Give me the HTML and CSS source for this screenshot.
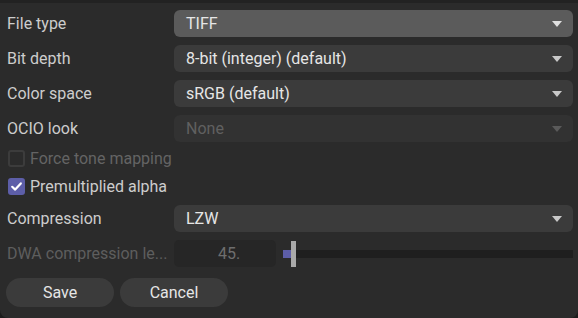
FILE: index.html
```html
<!DOCTYPE html>
<html lang="en">
<head>
    <meta charset="utf-8">
    <title>Export settings</title>
    <link rel="stylesheet" href="styles.css">
</head>
<body>
    <div class="dialog">
        <div class="row">
            <span class="label">File type</span>
            <div class="select hover"><span>TIFF</span><i class="arrow"></i></div>
        </div>
        <div class="row">
            <span class="label">Bit depth</span>
            <div class="select"><span>8-bit (integer) (default)</span><i class="arrow"></i></div>
        </div>
        <div class="row">
            <span class="label">Color space</span>
            <div class="select"><span>sRGB (default)</span><i class="arrow"></i></div>
        </div>
        <div class="row ocio">
            <span class="label">OCIO look</span>
            <div class="select disabled"><span>None</span><i class="arrow"></i></div>
        </div>

        <label class="check disabled">
            <span class="box"></span>
            <span>Force tone mapping</span>
        </label>
        <label class="check">
            <span class="box checked">
                <svg width="13" height="13" viewBox="0 0 13 13"><path d="M2.2 6.8 L5.2 9.6 L10.8 3.4" fill="none" stroke="#fff" stroke-width="2.2" stroke-linecap="round" stroke-linejoin="round"/></svg>
            </span>
            <span>Premultiplied alpha</span>
        </label>

        <div class="row">
            <span class="label">Compression</span>
            <div class="select"><span>LZW</span><i class="arrow"></i></div>
        </div>
        <div class="row">
            <span class="label muted">DWA compression le...</span>
            <div class="slider-row">
                <div class="number">45.</div>
                <div class="track">
                    <div class="fill"></div>
                    <div class="handle"></div>
                </div>
            </div>
        </div>

        <div class="buttons">
            <button>Save</button>
            <button>Cancel</button>
        </div>
    </div>
</body>
</html>
```

FILE: styles.css
```css
html {
    background-color: #1c1c1c;
}

body {
    margin: 0;
    width: 578px;
    height: 318px;
    overflow: hidden;
    font-family: Roboto, "Noto Sans", sans-serif;
    font-size: 16px;
    color: #cdcdcd;
}

.dialog {
    box-sizing: border-box;
    height: 318px;
    background-color: #2b2b2b;
    border-top: 3px solid #222222;
    border-radius: 0 0 8px 8px;
    padding: 7px 5px 0 7px;
    display: flex;
    flex-direction: column;
}

.row {
    display: grid;
    grid-template-columns: 167px 1fr;
    align-items: center;
    height: 27px;
    margin-bottom: 8px;
}

.row.ocio {
    margin-bottom: 7px;
}

.label {
    white-space: nowrap;
}

.label.muted {
    color: #5e5e5e;
}

.select {
    height: 27px;
    border-radius: 6px;
    background-color: #3b3b3b;
    color: #e6e6e6;
    display: flex;
    align-items: center;
    justify-content: space-between;
    padding: 0 11px 0 12px;
}

.select.hover {
    background-color: #5b5b5b;
}

.select.disabled {
    background-color: #323232;
    color: #606060;
}

.arrow {
    width: 0;
    height: 0;
    border-left: 5px solid transparent;
    border-right: 5px solid transparent;
    border-top: 6px solid #c8c8c8;
}

.select.hover .arrow {
    border-top-color: #e0e0e0;
}

.select.disabled .arrow {
    border-top-color: #5a5a5a;
}

.check {
    display: flex;
    align-items: center;
    gap: 5px;
    height: 19px;
    margin-bottom: 9px;
    padding-left: 1px;
}

.check.disabled {
    color: #646464;
}

.box {
    box-sizing: border-box;
    width: 17px;
    height: 17px;
    border-radius: 3px;
    border: 2px solid #3c3c3c;
    display: flex;
    align-items: center;
    justify-content: center;
}

.box.checked {
    border: none;
    background-color: #5d5ea8;
}

.slider-row {
    display: flex;
    align-items: center;
    gap: 7px;
}

.number {
    width: 102px;
    height: 27px;
    border-radius: 5px;
    background-color: #262626;
    color: #6e6e6e;
    display: flex;
    align-items: center;
    justify-content: center;
    padding-left: 8px;
    box-sizing: border-box;
}

.track {
    flex: 1;
    height: 8px;
    background-color: #1f1f1f;
    position: relative;
}

.fill {
    width: 8px;
    height: 8px;
    background-color: #5d5ea8;
}

.handle {
    position: absolute;
    left: 8px;
    top: -9px;
    width: 5px;
    height: 26px;
    background-color: #a9a9a9;
}

.buttons {
    display: flex;
    gap: 6px;
    margin-top: 3px;
}

button {
    width: 108px;
    height: 29px;
    border: none;
    border-radius: 15px;
    background-color: #3b3b3b;
    color: #e6e6e6;
    font-family: inherit;
    font-size: 16px;
    cursor: pointer;
}

button:first-child {
    margin-left: -1px;
}

button:hover {
    background-color: #474747;
}
```
